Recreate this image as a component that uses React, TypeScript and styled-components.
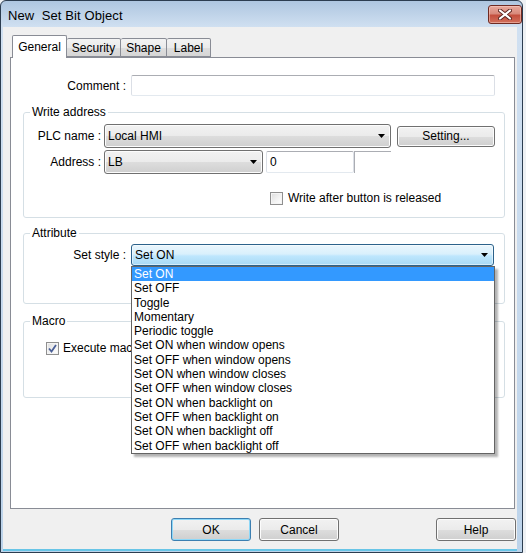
import styled, { createGlobalStyle } from 'styled-components'

const GlobalStyle = createGlobalStyle`
  body {
    margin: 0;
    background: #eef1f4;
    font-family: "Liberation Sans", Arial, sans-serif;
    font-size: 12px;
    color: #000;
  }
`

const Window = styled.div`
  width: 523px;
  height: 553px;
  box-sizing: border-box;
  border: 1px solid #2c3d50;
  border-radius: 6px 6px 0 0;
  background: linear-gradient(#aec6e0 0, #d0e0f1 26px, #c6d9ed 60%, #bcd3ea 100%);
  display: flex;
  flex-direction: column;
  overflow: hidden;
`

const TitleBar = styled.div`
  height: 26px;
  flex: none;
  display: flex;
  align-items: flex-start;
  padding-left: 7px;
`

const Title = styled.div`
  font-size: 13px;
  line-height: 13px;
  margin-top: 8px;
  letter-spacing: 0.1px;
`

const CloseButton = styled.div`
  margin: 4px 0 0 auto;
  width: 34px;
  height: 19px;
  box-sizing: border-box;
  border: 1px solid #6f2a22;
  border-radius: 3px;
  background: linear-gradient(#e9a99c 0%, #d88a7c 45%, #c44f3e 55%, #d2705c 100%);
  box-shadow: inset 0 0 0 1px rgba(255, 220, 210, 0.45);
  display: flex;
  align-items: center;
  justify-content: center;
`

const Client = styled.div`
  flex: 1;
  margin: 0 5px 3px 2px;
  background: #f0f0f0;
  box-shadow: 0 2px 0 #68c5e7;
  display: flex;
  flex-direction: column;
  padding: 8px 2px 8px 7px;
`

const TabRow = styled.div`
  display: flex;
  align-items: flex-end;
  padding-left: 2px;
  height: 22px;
`

const Tab = styled.div<{ $w: number; $active?: boolean }>`
  box-sizing: border-box;
  width: ${p => p.$w}px;
  height: ${p => (p.$active ? '23px' : '19px')};
  margin-bottom: ${p => (p.$active ? '-1px' : '0')};
  margin-right: 0;
  padding-top: ${p => (p.$active ? '4px' : '2px')};
  text-align: center;
  border: 1px solid #898c95;
  border-left-width: ${p => (p.$active ? '1px' : '0')};
  border-bottom: ${p => (p.$active ? 'none' : '1px solid #898c95')};
  border-radius: 2px 2px 0 0;
  background: ${p => (p.$active ? '#fff' : 'linear-gradient(#f3f3f3 0%, #ebebeb 50%, #dedede 51%, #d6d6d6 100%)')};
  position: relative;
  z-index: ${p => (p.$active ? 2 : 1)};
  line-height: 14px;
  white-space: nowrap;
`

const Panel = styled.div`
  height: 452px;
  box-sizing: border-box;
  border: 1px solid #898c95;
  background: #fff;
  display: flex;
  flex-direction: column;
`

const CommentRow = styled.div`
  display: flex;
  align-items: center;
  gap: 5px;
  margin-top: 17px;
`

const Label = styled.div<{ $w: number }>`
  width: ${p => p.$w}px;
  text-align: right;
  flex: none;
  white-space: nowrap;
`

const TextBox = styled.div<{ $w: number; $h: number }>`
  width: ${p => p.$w}px;
  height: ${p => p.$h}px;
  box-sizing: border-box;
  border: 1px solid #dbdfe6;
  border-top-color: #abadb3;
  border-bottom-color: #e3e9ef;
  border-radius: 2px;
  background: #fff;
  padding-left: 3px;
  display: flex;
  align-items: center;
  flex: none;
`

const Stub = styled.div`
  width: 37px;
  height: 22px;
  box-sizing: border-box;
  border-top: 1px solid #abadb3;
  border-left: 1px solid #abadb3;
  margin-left: -3px;
  flex: none;
`

const Group = styled.fieldset<{ $mt: number; $pt: number; $pb: number }>`
  margin: ${p => p.$mt}px 0 0 12px;
  width: 482px;
  box-sizing: border-box;
  padding: ${p => p.$pt}px 0 ${p => p.$pb}px 0;
  border: 1px solid #d5dfe5;
  border-radius: 3px;
  min-width: 0;
`

const Legend = styled.legend`
  padding: 0 2px;
  margin-left: 6px;
  line-height: 14px;
`

const Row = styled.div<{ $mt?: number; $gap?: number }>`
  display: flex;
  align-items: center;
  gap: ${p => p.$gap ?? 3}px;
  margin-top: ${p => p.$mt ?? 0}px;
`

const Combo = styled.div<{ $w: number; $h: number; $focus?: boolean }>`
  position: relative;
  width: ${p => p.$w}px;
  height: ${p => p.$h}px;
  box-sizing: border-box;
  flex: none;
  border: 1px solid ${p => (p.$focus ? '#2c628b' : '#707070')};
  border-radius: 3px;
  background: ${p =>
    p.$focus
      ? 'linear-gradient(#eaf6fd 0%, #d9f0fc 45%, #bee6fd 55%, #a7d9f5 100%)'
      : 'linear-gradient(#f2f2f2 0%, #ebebeb 50%, #dddddd 51%, #cfcfcf 100%)'};
  box-shadow: inset 0 0 0 1px ${p => (p.$focus ? 'rgba(255,255,255,0.5)' : '#fcfcfc')};
  display: flex;
  align-items: center;
  padding: 0 5px 0 3px;
`

const ComboText = styled.span`
  flex: 1;
`

const Button = styled.div<{ $w: number; $h: number; $default?: boolean; $ml?: number }>`
  width: ${p => p.$w}px;
  height: ${p => p.$h}px;
  margin-left: ${p => p.$ml ?? 0}px;
  box-sizing: border-box;
  flex: none;
  border: 1px solid ${p => (p.$default ? '#3c7fb1' : '#707070')};
  border-radius: 3px;
  background: linear-gradient(#f2f2f2 0%, #ebebeb 50%, #dddddd 51%, #cfcfcf 100%);
  box-shadow: inset 0 0 0 1px ${p => (p.$default ? '#8ed8f8' : '#fcfcfc')};
  display: flex;
  align-items: center;
  justify-content: center;
`

const CheckBox = styled.span`
  width: 13px;
  height: 13px;
  box-sizing: border-box;
  border: 1px solid #8f8f8f;
  background: linear-gradient(135deg, #dcdcdc 0%, #f4f4f4 60%, #ffffff 100%);
  box-shadow: inset 0 0 0 1px #f4f4f4;
  display: flex;
  align-items: center;
  justify-content: center;
  flex: none;
`

const CheckRow = styled.div<{ $mt: number; $pl: number; $gap: number }>`
  display: flex;
  align-items: center;
  gap: ${p => p.$gap}px;
  margin-top: ${p => p.$mt}px;
  padding-left: ${p => p.$pl}px;
  height: 14px;
  white-space: nowrap;
`

const List = styled.div`
  position: absolute;
  top: calc(100% + 1px);
  left: -1px;
  width: 364px;
  box-sizing: border-box;
  border: 1px solid #646464;
  background: #fff;
  box-shadow: 3px 3px 2px rgba(0, 0, 0, 0.3);
  z-index: 10;
`

const Item = styled.div<{ $sel?: boolean }>`
  height: 14.3px;
  line-height: 14.3px;
  padding-left: 2px;
  background: ${p => (p.$sel ? '#3399ff' : 'transparent')};
  color: ${p => (p.$sel ? '#fff' : '#000')};
  white-space: nowrap;
`

const ButtonRow = styled.div`
  display: flex;
  margin-top: 9px;
  padding-left: 161px;
  gap: 8px;
`

const Arrow = () => (
  <svg width="7" height="4" viewBox="0 0 7 4">
    <path d="M0 0H7L3.5 4Z" fill="#000" />
  </svg>
)

const tabs = [
  { label: 'General', w: 55 },
  { label: 'Security', w: 54 },
  { label: 'Shape', w: 46 },
  { label: 'Label', w: 44 },
]

const items = [
  'Set ON',
  'Set OFF',
  'Toggle',
  'Momentary',
  'Periodic toggle',
  'Set ON when window opens',
  'Set OFF when window opens',
  'Set ON when window closes',
  'Set OFF when window closes',
  'Set ON when backlight on',
  'Set OFF when backlight on',
  'Set ON when backlight off',
  'Set OFF when backlight off',
]

export default function App() {
  return (
    <>
      <GlobalStyle />
      <Window>
        <TitleBar>
          <Title>New&nbsp; Set Bit Object</Title>
          <CloseButton>
            <svg width="14" height="11" viewBox="0 0 14 11">
              <path d="M2 1.5L12 9.5M12 1.5L2 9.5" stroke="#5b2620" strokeWidth="4" strokeLinecap="round" />
              <path d="M2 1.5L12 9.5M12 1.5L2 9.5" stroke="#fff" strokeWidth="2.2" strokeLinecap="round" />
            </svg>
          </CloseButton>
        </TitleBar>
        <Client>
          <TabRow>
            {tabs.map((t, i) => (
              <Tab key={t.label} $w={t.w} $active={i === 0}>
                {t.label}
              </Tab>
            ))}
          </TabRow>
          <Panel>
            <CommentRow>
              <Label $w={115}>Comment :</Label>
              <TextBox $w={364} $h={21} />
            </CommentRow>

            <Group $mt={9} $pt={5} $pb={12}>
              <Legend>Write address</Legend>
              <Row>
                <Label $w={77}>PLC name :</Label>
                <Combo $w={287} $h={24}>
                  <ComboText>Local HMI</ComboText>
                  <Arrow />
                </Combo>
                <Button $w={98} $h={21} $ml={3}>
                  Setting...
                </Button>
              </Row>
              <Row $mt={2}>
                <Label $w={77}>Address :</Label>
                <Combo $w={159} $h={24}>
                  <ComboText>LB</ComboText>
                  <Arrow />
                </Combo>
                <TextBox $w={88} $h={22}>0</TextBox>
                <Stub />
              </Row>
              <CheckRow $mt={17} $pl={246} $gap={5}>
                <CheckBox />
                Write after button is released
              </CheckRow>
            </Group>

            <Group $mt={8} $pt={4} $pb={37}>
              <Legend>Attribute</Legend>
              <Row $gap={5}>
                <Label $w={102}>Set style :</Label>
                <Combo $w={363} $h={22} $focus>
                  <ComboText>Set ON</ComboText>
                  <Arrow />
                  <List>
                    {items.map((t, i) => (
                      <Item key={t} $sel={i === 0}>
                        {t}
                      </Item>
                    ))}
                  </List>
                </Combo>
              </Row>
            </Group>

            <Group $mt={10} $pt={13} $pb={42}>
              <Legend>Macro</Legend>
              <CheckRow $mt={0} $pl={22} $gap={4}>
                <CheckBox>
                  <svg width="9" height="9" viewBox="0 0 9 9">
                    <path d="M1 4.5L3.5 7.5L8 1" stroke="#4a5f97" strokeWidth="1.8" fill="none" />
                  </svg>
                </CheckBox>
                Execute macro
              </CheckRow>
            </Group>
          </Panel>
          <ButtonRow>
            <Button $w={80} $h={23} $default>
              OK
            </Button>
            <Button $w={80} $h={23}>
              Cancel
            </Button>
            <Button $w={80} $h={23} $ml={89}>
              Help
            </Button>
          </ButtonRow>
        </Client>
      </Window>
    </>
  )
}
